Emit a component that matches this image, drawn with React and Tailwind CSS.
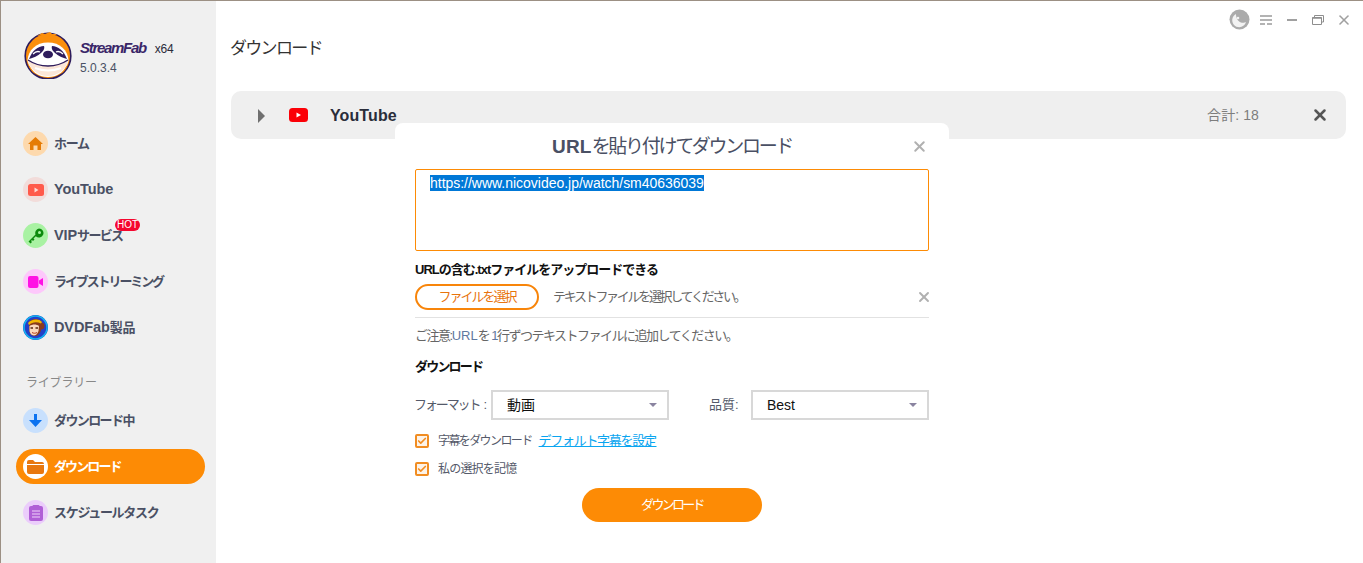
import { Check, X } from "lucide-react";

const jp = `font-['Liberation_Sans','Noto_Sans_CJK_JP',sans-serif]`;

const SlothLogo = () => (
  <svg width="50" height="48" viewBox="0 0 50 48" className="shrink-0">
    <circle cx="25" cy="25" r="22.800" fill="#fb8f0c" stroke="#2e1c5c" strokeWidth="1.600" />
    <path d="M14 5l5-3 3 1 5-2 2 2 5 0-3 2c-5-1-12-1-17 0z" fill="#fb8f0c" />
    <path d="M4.500 30C5 19 13 11.500 25 11.500S45 19 45.500 30C43 40 35 46 25 46S7 40 4.500 30z" fill="#fff" />
    <path d="M21 15c-6 0-12 5-15 13 4-1 9-3 12-6 2-2 4-4 3-7z" fill="#2e1c5c" />
    <path d="M29 15c6 0 12 5 15 13-4-1-9-3-12-6-2-2-4-4-3-7z" fill="#2e1c5c" />
    <path d="M10 23c2-2 5-3 7-2M40 23c-2-2-5-3-7-2" stroke="#fff" strokeWidth="1.300" fill="none" />
    <ellipse cx="25" cy="23.500" rx="5" ry="3.800" fill="#2e1c5c" />
    <path d="M5 29c6 4 13 6 20 6s14-2 20-6c-1 9-10 16-20 16S6 38 5 29z" fill="#fbe6d8" />
    <path d="M5 29c6 4 13 6 20 6s14-2 20-6" stroke="#2e1c5c" strokeWidth="1.300" fill="none" />
    <path d="M12 37c8 3 18 3 26 0" stroke="#fff" strokeWidth="2" fill="none" />
    <path d="M5 33l7 10c-3-2-6-6-7-10zM45 33l-7 10c3-2 6-6 7-10z" fill="#fb8f0c" />
  </svg>
);

const HomeIcon = () => (
  <svg width="15" height="15" viewBox="0 0 15 15">
    <path d="M7.500 1 15 8h-2v6H9.500V9.500h-4V14H2V8H0z" fill="#e57c06" />
  </svg>
);

const YoutubeNavIcon = () => (
  <svg width="16" height="12" viewBox="0 0 16 12">
    <rect width="16" height="12" rx="2.500" fill="#ff5a4b" />
    <path d="M6.500 3.500 10.500 6l-4 2.500z" fill="#ffd9d4" />
  </svg>
);

const KeyIcon = () => (
  <svg width="16" height="16" viewBox="0 0 16 16">
    <path d="M11 .5a4.500 4.500 0 1 1-3.200 7.700L5.500 10.500 6.500 11.500 5 13 4 12 3 13l1 1-1.500 1.500L.5 13.500l7-7A4.500 4.500 0 0 1 11 .5z" fill="#0c8a0c" />
    <circle cx="11.500" cy="4.500" r="1.500" fill="#a9f2a3" />
  </svg>
);

const CameraIcon = () => (
  <svg width="15" height="12" viewBox="0 0 15 12">
    <rect width="10.500" height="12" rx="2" fill="#ff12e4" />
    <path d="M11 4.500 15 2v8l-4-2.500z" fill="#ff12e4" />
  </svg>
);

const MonkeyIcon = () => (
  <svg width="25" height="25" viewBox="0 0 25 25">
    <circle cx="12.500" cy="12.500" r="12.500" fill="#2440c8" />
    <circle cx="12.500" cy="12.500" r="11.500" fill="none" stroke="#13b5f0" strokeWidth="1.500" />
    <circle cx="18" cy="11" r="3.500" fill="#8a3b1d" />
    <path d="M6 7c3-4 10-4 13 0l-1 8c-1 4-4 6-6 6-4 0-6-3-6-7z" fill="#8a3b1d" />
    <path d="M6.500 11c3-2 7-2 9.500 0l-.5 5c-1 3-3 4.500-4.500 4.500-3 0-4.500-3-4.500-5.500z" fill="#fbd7bd" />
    <path d="M5 8c3-4 11-5 14-1l-1 1.500C14 6.500 9 7 6 10z" fill="#f2b705" />
    <path d="M7.500 13h2.500M12.500 13h2.500" stroke="#5a2a10" strokeWidth="1.400" />
    <path d="M9 17.500c1.500 1 3.500 1 5 0" stroke="#b53d1c" strokeWidth="1" fill="none" />
  </svg>
);

const DownArrowIcon = () => (
  <svg width="13" height="13" viewBox="0 0 13 13">
    <path d="M5 0h3v6h5l-6.500 7L0 6h5z" fill="#0b72f0" />
  </svg>
);

const FolderIcon = () => (
  <svg width="17" height="14" viewBox="0 0 17 14">
    <path d="M0 2a2 2 0 0 1 2-2h4l2 2h7a2 2 0 0 1 2 2v8a2 2 0 0 1-2 2H2a2 2 0 0 1-2-2z" fill="#e8780f" />
    <path d="M0 4.500h17" stroke="#fff" strokeWidth="1" />
  </svg>
);

const TaskIcon = () => (
  <svg width="14" height="16" viewBox="0 0 14 16">
    <rect y="1" width="14" height="15" rx="2" fill="#b05fd6" />
    <rect x="3.500" width="7" height="2.500" rx="1" fill="#b05fd6" />
    <path d="M3 6h8M3 9h8M3 12h8" stroke="#efd4fa" strokeWidth="1.200" />
  </svg>
);

const Latin = ({ children }) => <span className="text-[14.5px] tracking-[-0.1px]">{children}</span>;

const navTop = [
  { key: "home", label: "ホーム", track: "tracking-[-1.300px]", icon: <HomeIcon />, bg: "bg-[#fdd9ad]" },
  { key: "yt", label: <Latin>YouTube</Latin>, track: "", icon: <YoutubeNavIcon />, bg: "bg-[#f2dcda]" },
  { key: "vip", label: <><Latin>VIP</Latin>サービス</>, track: "tracking-[-1.700px]", icon: <KeyIcon />, bg: "bg-[#a9f2a3]", hot: true },
  { key: "live", label: "ライブストリーミング", track: "tracking-[-2.100px]", icon: <CameraIcon />, bg: "bg-[#fdc8fb]" },
  { key: "dvd", label: <><Latin>DVDFab</Latin>製品</>, track: "tracking-[-0.300px]", icon: <MonkeyIcon />, bg: "bg-transparent" },
];

const navLib = [
  { key: "dling", label: "ダウンロード中", track: "tracking-[-1.600px]", icon: <DownArrowIcon />, bg: "bg-[#c8e0fd]" },
  { key: "dl", label: "ダウンロード", track: "tridge tracking-[-1.900px]", icon: <FolderIcon />, bg: "bg-white", active: true },
  { key: "task", label: "スケジュールタスク", track: "tracking-[-1.300px]", icon: <TaskIcon />, bg: "bg-[#ebcdfb]" },
];

const NavItem = ({ item }) => (
  <div
    className={`relative flex items-center h-[35px] rounded-full pl-[7px] ${
      item.active ? "bg-[#fd8b05] text-white" : "text-[#4a5064]"
    }`}
  >
    <span className={`flex items-center justify-center w-[25px] h-[25px] rounded-full ${item.bg}`}>
      {item.icon}
    </span>
    <span className={`ml-[6px] text-[13px] font-bold whitespace-nowrap ${item.track}`}>{item.label}</span>
    {item.hot && (
      <span className="absolute left-[99px] top-[1px] h-[12px] px-[2px] rounded-full bg-[#f5072f] text-white text-[10px] leading-[12px]">
        HOT
      </span>
    )}
  </div>
);

const Sidebar = () => (
  <aside className="w-[215px] shrink-0 bg-[#f0f0f0] flex flex-col pl-[15px] pr-[11px]">
    <div className="flex pl-[7px] pt-[30px] h-[109px]">
      <SlothLogo />
      <div className="ml-[7px] mt-[6px]">
        <div className="flex items-baseline text-[#2b2b3a]">
          <span className="text-[15px] font-bold italic text-[#3a2668] tracking-[-1.300px]">StreamFab</span>
          <span className="ml-[9px] text-[12px] tracking-[-0.300px]">x64</span>
        </div>
        <div className="text-[12px] text-[#4a5064] -mt-[1px]">5.0.3.4</div>
      </div>
    </div>
    <div className="flex flex-col gap-[11px] mt-[16px]">
      {navTop.map((item) => (
        <NavItem key={item.key} item={item} />
      ))}
    </div>
    <div className="mt-[28px] pl-[10px] h-[20px] text-[12px] leading-[20px] text-[#888888] tracking-[-0.200px]">ライブラリー</div>
    <div className="flex flex-col gap-[11px] mt-[10px]">
      {navLib.map((item) => (
        <NavItem key={item.key} item={item} />
      ))}
    </div>
  </aside>
);

const WindowControls = () => (
  <div className="flex items-center justify-end h-[36px] pr-[11px] pt-[1px]">
    <svg width="21" height="21" viewBox="0 0 21 21" className="mr-[10px]">
      <circle cx="10.500" cy="10.500" r="10" fill="#ababab" />
      <path d="M7 5a7 7 0 1 0 10 8c-1 .5-3 1-5 .5-3-1-5-4.500-5-8.500z" fill="#f2f2f2" />
      <circle cx="9" cy="9" r="1.300" fill="#f2f2f2" />
    </svg>
    <svg width="12" height="10" viewBox="0 0 12 10" className="mr-[15px]">
      <path d="M0 1h12M0 5h12M0 9h5M7 9h5" stroke="#9a9a9a" strokeWidth="1.600" />
    </svg>
    <svg width="10" height="2" viewBox="0 0 10 2" className="mr-[15px]">
      <path d="M0 1h10" stroke="#a0a0a0" strokeWidth="2" />
    </svg>
    <svg width="12" height="10" viewBox="0 0 12 10" className="mr-[12px]">
      <path d="M2.500 2V.5h9V7H9.500M.5 2.500h9v7h-9z" fill="none" stroke="#8e8e8e" />
      <path d="M.5 3h9" stroke="#8e8e8e" strokeWidth="1.500" />
    </svg>
    <X size={16} strokeWidth={2.400} className="text-[#a0a0a0]" />
  </div>
);

const YoutubeRow = () => (
  <div className="mt-[31px] h-[48px] mr-[17px] rounded-[10px] bg-[#efefef] flex items-center pl-[27px] pr-[17px]">
    <svg width="7" height="14" viewBox="0 0 7 14" className="mt-[1px]">
      <path d="M0 0l7 7-7 7z" fill="#6f6f6f" />
    </svg>
    <svg width="19" height="14" viewBox="0 0 19 14" className="ml-[24px]">
      <rect width="19" height="14" rx="3.500" fill="#fb0007" />
      <path d="M7.500 4.500 12 7l-4.500 2.500z" fill="#fff" />
    </svg>
    <span className="ml-[22px] mt-[1px] text-[16px] font-bold text-[#2a2d3a] tracking-[0.100px]">YouTube</span>
    <span className="ml-auto text-[14px] text-[#7d7d7d] tracking-[0.100px]">合計: 18</span>
    <X size={18} strokeWidth={3.400} className="ml-[52px] text-[#555555]" />
  </div>
);

const Select = ({ value }) => (
  <div className="w-[178px] h-[30px] border-2 border-[#d8d8d8] flex items-center pl-[14px] pr-[10px] text-[14px] text-[#111111]">
    {value}
    <svg width="8" height="4" viewBox="0 0 8 4" className="ml-auto">
      <path d="M0 0h8L4 4z" fill="#8a84a0" />
    </svg>
  </div>
);

const Checkbox = () => (
  <span className="w-[14px] h-[14px] rounded-[2px] border-2 border-[#f18d22] bg-[#fdf3e8] flex items-center justify-center shrink-0">
    <Check size={10} strokeWidth={4} className="text-[#f18d22]" />
  </span>
);

const UrlDialog = () => (
  <div className="absolute left-[394px] top-[122px] w-[554px] h-[440px] bg-white rounded-t-[8px] px-5">
    <div className="relative h-[46px] flex items-center justify-center pt-[3px] text-[19px] text-[#4a5064]">
      <span className="tracking-[-2.300px]">
        <span className="font-bold tracking-[0.200px]">URL</span>を貼り付けてダウンロード
      </span>
      <X size={17} strokeWidth={2.800} className="absolute right-[1px] top-[15px] text-[#b0b0b0]" />
    </div>
    <div className="h-[82px] border border-[#fd8b05] rounded-[2px] pl-[14px] pt-[5px] text-[14px] leading-[16px]">
      <span className="bg-[#0078d7] text-white tracking-[-0.020px]">https://www.nicovideo.jp/watch/sm40636039</span>
    </div>
    <div className="mt-[10px] h-[17px] text-[13px] leading-[17px] font-bold text-[#111111] tracking-[-1px]">
      URLの含む.txtファイルをアップロードできる
    </div>
    <div className="relative mt-[6px] flex items-center pb-[7px] border-b border-[#e2e2e2]">
      <span className="w-[124px] h-[26px] rounded-full border-2 border-[#f8850a] flex items-center justify-center text-[13px] text-[#e8740c] tracking-[-2px]">
        ファイルを選択
      </span>
      <span className="ml-[14px] text-[13px] text-[#666666] tracking-[-2.300px]">テキストファイルを選択してください。</span>
      <X size={16} strokeWidth={2.800} className="ml-auto mr-[-3px] text-[#b0b0b0]" />
    </div>
    <div className="mt-[9px] h-[17px] text-[13px] leading-[17px] text-[#666666] tracking-[-1.500px]">
      ご注意:<span className="text-[#5f78a0] tracking-[0px]">URL</span>を<span className="text-[#5f78a0]"> 1</span>行ずつテキストファイルに追加してください。
    </div>
    <div className="mt-[14px] h-[17px] text-[13px] leading-[17px] font-bold text-[#111111] tracking-[-1.800px]">ダウンロード</div>
    <div className="mt-[15px] flex items-center text-[13px] text-[#555a6a]">
      <span className="w-[77px] -ml-[1px] whitespace-nowrap">
        <span className="tracking-[-2.100px]">フォーマット</span>
        <span className="ml-[4px]">:</span>
      </span>
      <Select value="動画" />
      <span className="ml-[40px] w-[42px] whitespace-nowrap">品質:</span>
      <Select value="Best" />
    </div>
    <div className="mt-[13px] flex items-center h-[16px]">
      <Checkbox />
      <span className="ml-[9px] text-[12px] text-[#555a6a] tracking-[-1.600px]">字幕をダウンロード</span>
      <span className="ml-[7px] text-[13px] text-[#0aa5f0] underline tracking-[-1.300px]">デフォルト字幕を設定</span>
    </div>
    <div className="mt-[12px] flex items-center h-[16px]">
      <Checkbox />
      <span className="ml-[9px] text-[12px] text-[#555a6a] tracking-[-0.800px]">私の選択を記憶</span>
    </div>
    <div className="mt-[11px] mx-auto w-[180px] h-[34px] rounded-full bg-[#fd8b05] text-white text-[13px] flex items-center justify-center tracking-[-2.700px]">
      ダウンロード
    </div>
  </div>
);

export default function App() {
  return (
    <div className={`relative w-[1363px] h-[563px] overflow-hidden bg-white flex border-t border-l border-[#9c9084] ${jp}`}>
      <Sidebar />
      <main className="flex-1 pl-[14px]">
        <WindowControls />
        <div className="h-[23px] text-[17px] leading-[23px] text-[#333333] tracking-[-1.700px]">ダウンロード</div>
        <div className="pl-[1px]">
          <YoutubeRow />
        </div>
      </main>
      <UrlDialog />
    </div>
  );
}
